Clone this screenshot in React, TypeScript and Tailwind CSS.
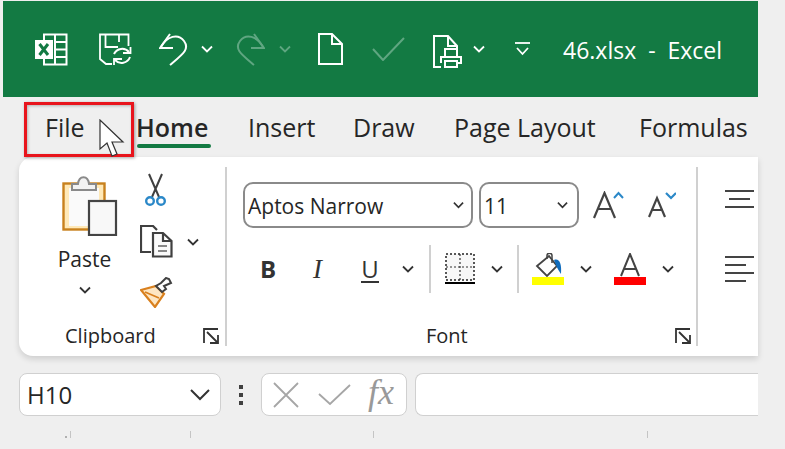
import React from "react";

const Chev = ({ c = "#fff", w = 12, className = "" }: { c?: string; w?: number; className?: string }) => (
  <svg width={w} height={8} viewBox="0 0 12 8" className={"shrink-0 " + className} fill="none">
    <path d="M1 1.5 L6 6.5 L11 1.5" stroke={c} strokeWidth="1.8" />
  </svg>
);

const ExcelIcon = () => (
  <svg width="33" height="33" viewBox="0 0 33 33" fill="none" className="shrink-0 ml-[35px]">
    <path d="M9 1.5 H31.5 V31.5 H9 Z" stroke="#fff" strokeWidth="2" />
    <path d="M20 1.5 V31.5 M20 9 H32 M20 16.5 H32 M20 24 H32" stroke="#fff" strokeWidth="2" />
    <rect x="0" y="7" width="18" height="19" fill="#fff" />
    <path d="M4.5 11 L13 22 M13 11 L4.5 22" stroke="#137a43" strokeWidth="3" />
  </svg>
);
const SaveIcon = () => (
  <svg width="33" height="33" viewBox="0 0 33 33" fill="none" className="shrink-0 ml-[31px]">
    <path d="M13 31 H7 L1 26 V1.5 H29.5 V13" stroke="#fff" strokeWidth="1.8" />
    <path d="M6.5 2 V14 H19" stroke="#fff" strokeWidth="1.8" />
    <path d="M20 2 V9 M19 14 H14" stroke="#fff" strokeWidth="1.8" />
    <path d="M15 21 A 9 9 0 0 1 30 19 M31 24 A 9 9 0 0 1 16 27" stroke="#fff" strokeWidth="2" />
    <path d="M24 20 H31.5 V14 M23 26 H15 V32" stroke="#fff" strokeWidth="1.8" />
  </svg>
);
const UndoIcon = ({ c = "#fff", flip = false, ml }: { c?: string; flip?: boolean; ml: string }) => (
  <svg width="29" height="33" viewBox="0 0 29 33" fill="none" className={"shrink-0 " + ml} style={flip ? { transform: "scaleX(-1)" } : undefined}>
    <path d="M11 1 L1 15 H14" stroke={c} strokeWidth="2" />
    <path d="M2 14 C 8 3, 19 0, 25 8 C 31 16, 24 21, 11 32" stroke={c} strokeWidth="2" />
  </svg>
);
const NewDoc = () => (
  <svg width="25" height="32" viewBox="0 0 25 32" fill="none" className="shrink-0 ml-[27px]">
    <path d="M1 1 H14 L24 11 V31 H1 Z M14 1 V11 H24" stroke="#fff" strokeWidth="2" />
  </svg>
);
const Check = () => (
  <svg width="33" height="24" viewBox="0 0 33 24" fill="none" className="shrink-0 ml-[29px]">
    <path d="M1 12 L11 23 L32 1" stroke="#5fa681" strokeWidth="2" />
  </svg>
);
const PrintIcon = () => (
  <svg width="29" height="33" viewBox="0 0 29 33" fill="none" className="shrink-0 ml-[28px] mt-[4px]">
    <path d="M8 32 H1 V1 H15 L24 11 V14 M15 1 V11 H24" stroke="#fff" strokeWidth="2" />
    <path d="M12 22 V14 H24 V22 M8 28 V22 H28 V28 H24 M12 26 H24 V32 H12 Z" stroke="#fff" strokeWidth="2" />
  </svg>
);
const Qat = () => (
  <svg width="15" height="15" viewBox="0 0 15 15" fill="none" className="shrink-0 ml-[30px]">
    <path d="M0 1 H15" stroke="#fff" strokeWidth="1.8" />
    <path d="M2 6 L7.5 12 L13 6" stroke="#fff" strokeWidth="1.8" />
  </svg>
);

const Cursor = () => (
  <svg width="26" height="40" viewBox="0 0 26 40" className="absolute left-[99px] top-[119px]">
    <path d="M1 1 V30 L8 24 L13 37 L18 35 L13 23 L24 23 Z" fill="#fff" stroke="#333" strokeWidth="1.2" />
  </svg>
);

const Launcher = ({ ml }: { ml: string }) => (
  <svg width="16" height="16" viewBox="0 0 16 16" fill="none" className={"shrink-0 " + ml}>
    <path d="M1 15 V1 H15" stroke="#333" strokeWidth="1.8" />
    <path d="M4 4 L14 14 M15 7 V15 H7" stroke="#333" strokeWidth="1.8" />
  </svg>
);

const PasteIcon = () => (
  <svg width="56" height="61" viewBox="0 0 56 61" fill="none" className="shrink-0">
    <rect x="1.5" y="8.5" width="41" height="46" fill="#ffe9b8" stroke="#c8811d" strokeWidth="2.4" />
    <rect x="7" y="13" width="30" height="38" fill="#fafafa" />
    <path d="M10 15 V9 H16 C17 0, 26 0, 27 9 H34 V15 Z" fill="#f2f2f2" stroke="#8a8a8a" strokeWidth="2" />
    <rect x="27" y="26" width="27" height="34" fill="#f8f8f8" stroke="#444" strokeWidth="2.2" />
  </svg>
);
const Scissors = () => (
  <svg width="21" height="34" viewBox="0 0 21 34" fill="none">
    <path d="M4 1 L14 24 M17 1 L7 24" stroke="#404040" strokeWidth="2" />
    <circle cx="5" cy="28" r="3.8" fill="#fff" stroke="#2b88c8" strokeWidth="2.4" />
    <circle cx="16" cy="28" r="3.8" fill="#fff" stroke="#2b88c8" strokeWidth="2.4" />
  </svg>
);
const CopyIcon = () => (
  <svg width="33" height="33" viewBox="0 0 33 33" fill="none">
    <path d="M11 27 H1 V1 H13 L17 5" stroke="#404040" strokeWidth="2.2" />
    <path d="M13 8 H23 L31.5 16 V31.5 H13 Z M23 8 V16 H31.5" fill="#fafafa" stroke="#404040" strokeWidth="2.2" />
    <path d="M18 21 H27 M18 26 H27" stroke="#888" strokeWidth="2.2" />
  </svg>
);
const Painter = () => (
  <svg width="33" height="31" viewBox="0 0 33 31" fill="none">
    <path d="M1 13 L16 9 L24 17 L15 30 Z" fill="#fde6c3" stroke="#d9801e" strokeWidth="2.2" />
    <path d="M5 15 L19 21" stroke="#d9801e" strokeWidth="1.8" />
    <path d="M16 9 L22 15 L26 12 L24 9 L31 6 L29 2 L26 1 L21 6 Z" fill="#fff" stroke="#404040" strokeWidth="2" />
  </svg>
);

const BordersIcon = () => (
  <svg width="30" height="32" viewBox="0 0 30 32" fill="none" className="shrink-0 ml-[14px]">
    <rect x="1" y="1" width="28" height="26" fill="#f7f7f7" stroke="#222" strokeWidth="1.5" strokeDasharray="2 2" />
    <path d="M15 1 V27 M1 14 H29" stroke="#333" strokeWidth="1.2" strokeDasharray="2 2" />
    <rect x="0" y="29" width="30" height="2" fill="#000" />
  </svg>
);
const FillIcon = () => (
  <svg width="32" height="32" viewBox="0 0 32 32" fill="none" className="shrink-0 ml-[13px]">
    <path d="M5 13 L17 3 L25 13 L15 23 Z" fill="#fff" stroke="#444" strokeWidth="1.8" />
    <path d="M15 6 V2.5 C15 -0.5 20 -0.5 20 2.5 V10" stroke="#444" strokeWidth="1.5" />
    <path d="M22 7 C27 5 30 10 29 21 C27 18 25 15 24 12 Z" fill="#0f6cbd" />
    <rect x="0" y="24" width="32" height="8" fill="#ffff00" />
  </svg>
);
const ColorA = () => (
  <svg width="32" height="32" viewBox="0 0 32 32" fill="none" className="shrink-0 ml-[22px]">
    <path d="M7 23 L16 1 L25 23 M10 16 H22" stroke="#444" strokeWidth="2" />
    <rect x="0" y="24" width="32" height="8" fill="#ff0000" />
  </svg>
);
const GrowA = () => (
  <svg width="31" height="28" viewBox="0 0 31 28" fill="none" className="shrink-0 ml-[14px]">
    <path d="M1 27 L11.5 2 L22 27 M5 18 H18" stroke="#444" strokeWidth="2.2" />
    <path d="M21 7 L25.5 2 L30 7" stroke="#2b88c8" strokeWidth="2" />
  </svg>
);
const ShrinkA = () => (
  <svg width="28" height="26" viewBox="0 0 28 26" fill="none" className="shrink-0 ml-[24px]">
    <path d="M1 25 L9 6 L17 25 M4 18 H14" stroke="#444" strokeWidth="2.2" />
    <path d="M18 1 L23 6 L28 1" stroke="#2b88c8" strokeWidth="2.2" />
  </svg>
);
const AlignLines = ({ rows }: { rows: number[][] }) => (
  <svg width="29" height={rows.length * 8 + 2} viewBox={`0 0 29 ${rows.length * 8 + 2}`} fill="none">
    {rows.map((r, i) => (
      <rect key={i} x={r[0]} y={i * 8 + 1} width={r[1]} height="2" fill="#444" />
    ))}
  </svg>
);

const Combo = ({ w, text, pad }: { w: string; text: string; pad: string }) => (
  <div className={"h-[46px] flex items-center justify-between rounded-[10px] border-2 border-[#8a8a8a] bg-white text-[21px] text-[#262626] " + w + " " + pad}>
    <span className="pt-[3px] leading-none">{text}</span>
    <Chev c="#333" w={11} />
  </div>
);

export default function App() {
  return (
    <div
      className="relative w-[785px] h-[449px] overflow-hidden bg-[#efefef] text-[#262626]"
      style={{ fontFamily: '"Open Sans", "Noto Sans", sans-serif' }}
    >
      <div className="ml-[3px] mt-[1px] w-[755px] h-[96px] bg-[#137a43] flex items-center text-white">
        <div className="flex items-center -ml-[3px]">
          <ExcelIcon />
          <SaveIcon />
          <UndoIcon ml="ml-[27px]" />
          <Chev w={12} className="ml-[13px]" />
          <UndoIcon c="#5fa681" flip ml="ml-[23px]" />
          <Chev c="#5fa681" w={12} className="ml-[14px]" />
          <NewDoc />
          <Check />
          <PrintIcon />
          <Chev w={12} className="ml-[11px]" />
          <Qat />
          <span className="ml-[33px] mt-[3px] text-[23px] leading-none whitespace-pre">46.xlsx  -  Excel</span>
        </div>
      </div>

      <div className="h-[60px] w-[758px] flex items-center text-[25px] leading-none whitespace-nowrap">
        <span className="ml-[45px] w-[91px] shrink-0">File</span>
        <div className="relative w-[112px] shrink-0">
          <span className="font-semibold">Home</span>
          <div className="absolute left-[1px] w-[74px] -bottom-[8px] h-[4px] rounded-full bg-[#137a43]" />
        </div>
        <span className="w-[105px] shrink-0">Insert</span>
        <span className="w-[101px] shrink-0">Draw</span>
        <span className="w-[185px] shrink-0">Page Layout</span>
        <span className="shrink-0">Formulas</span>
      </div>

      <div className="ml-[19px] w-[739px] h-[199px] bg-white rounded-l-[14px] shadow-[0_3px_6px_rgba(0,0,0,0.14)] flex text-[20px]">
        <div className="w-[208px] shrink-0 border-r-2 border-[#d0d0d0] my-[10px] flex flex-col">
          <div className="h-[160px] flex">
            <div className="ml-[43px] w-[56px] flex flex-col items-center">
              <div className="mt-[8px]"><PasteIcon /></div>
              <div className="mt-[9px] -ml-[11px] text-[21px] leading-[28px]">Paste</div>
              <Chev c="#333" w={12} className="mt-[13px] -ml-[11px]" />
            </div>
            <div className="ml-[22px] flex flex-col">
              <div className="ml-[5px] mt-[6px]"><Scissors /></div>
              <div className="mt-[18px] flex items-center">
                <CopyIcon />
                <Chev c="#333" w={12} className="ml-[14px]" />
              </div>
              <div className="mt-[19px]"><Painter /></div>
            </div>
          </div>
          <div className="flex-1 flex items-center">
            <span className="ml-[46px] text-[20px] leading-none">Clipboard</span>
            <Launcher ml="ml-[47px]" />
          </div>
        </div>

        <div className="w-[471px] shrink-0 border-r-2 border-[#d0d0d0] my-[10px] flex flex-col">
          <div className="h-[160px] pl-[16px] flex flex-col">
            <div className="mt-[15px] flex items-center">
              <Combo w="w-[230px]" text="Aptos Narrow" pad="pl-[3px] pr-[7px]" />
              <Combo w="w-[100px] ml-[6px]" text="11" pad="pl-[3px] pr-[9px]" />
              <GrowA />
              <ShrinkA />
            </div>
            <div className="mt-[17px] h-[48px] flex items-center">
              <span className="ml-[17px] w-[16px] text-[24px] leading-none font-bold text-[#333]">B</span>
              <span className="ml-[37px] w-[14px] text-[27px] leading-none italic text-[#333]" style={{ fontFamily: '"Liberation Serif", serif' }}>I</span>
              <span className="ml-[34px] w-[18px] text-[24px] leading-[25px] border-b-2 border-[#333] text-[#333] flex justify-center">U</span>
              <Chev c="#333" w={12} className="ml-[23px]" />
              <div className="ml-[15px] w-[2px] h-[48px] bg-[#d0d0d0]" />
              <BordersIcon />
              <Chev c="#333" w={12} className="ml-[16px]" />
              <div className="ml-[14px] w-[2px] h-[48px] bg-[#d0d0d0]" />
              <FillIcon />
              <Chev c="#333" w={12} className="ml-[16px]" />
              <ColorA />
              <Chev c="#333" w={12} className="ml-[16px]" />
            </div>
          </div>
          <div className="flex-1 flex items-center">
            <span className="ml-[199px] text-[20px] leading-none">Font</span>
            <Launcher ml="ml-[207px]" />
          </div>
        </div>

        <div className="ml-[27px] flex flex-col">
          <div className="mt-[32px]"><AlignLines rows={[[0, 29], [4, 21], [0, 29]]} /></div>
          <div className="mt-[40px]"><AlignLines rows={[[0, 29], [0, 21], [0, 29], [0, 21]]} /></div>
        </div>
      </div>

      <div className="mt-[17px] ml-[19px] w-[739px] h-[43px] flex items-stretch">
        <div className="w-[202px] rounded-[8px] border border-[#d0d0d0] bg-white flex items-center justify-between pl-[7px] pr-[10px] text-[24px] leading-none">
          <span>H10</span>
          <svg width="20" height="12" viewBox="0 0 20 12" fill="none"><path d="M1 1 L10 10 L19 1" stroke="#333" strokeWidth="2" /></svg>
        </div>
        <div className="w-[40px] flex flex-col items-center justify-center gap-[4px]">
          <div className="w-[4px] h-[4px] bg-[#404040]" />
          <div className="w-[4px] h-[4px] bg-[#404040]" />
          <div className="w-[4px] h-[4px] bg-[#404040]" />
        </div>
        <div className="w-[146px] rounded-[8px] border border-[#d0d0d0] bg-white flex items-center">
          <svg width="26" height="26" viewBox="0 0 26 26" fill="none" className="ml-[11px]"><path d="M1 1 L25 25 M25 1 L1 25" stroke="#a6a6a6" strokeWidth="1.8" /></svg>
          <svg width="33" height="22" viewBox="0 0 33 22" fill="none" className="ml-[19px]"><path d="M1 10 L12 20 L32 1" stroke="#a6a6a6" strokeWidth="1.8" /></svg>
          <span className="ml-[17px] text-[36px] leading-none italic text-[#999999] -mt-[5px]" style={{ fontFamily: '"Liberation Serif", serif' }}>fx</span>
        </div>
        <div className="ml-[8px] flex-1 rounded-l-[8px] border border-r-0 border-[#d0d0d0] bg-white" />
      </div>

      <div className="mt-[14px] h-[8px] flex items-end">
        <div className="ml-[65px] w-[2px] h-[2px] bg-[#b0b0b0]" />
        <div className="ml-[3px] w-px h-[7px] bg-[#c4c4c4]" />
        <div className="ml-[119px] w-px h-[7px] bg-[#c4c4c4]" />
        <div className="ml-[182px] w-px h-[7px] bg-[#c4c4c4]" />
        <div className="ml-[273px] w-px h-[7px] bg-[#c4c4c4]" />
      </div>

      <div className="absolute left-[24px] top-[102px] w-[110px] h-[55px] border-[3px] border-[#e8141c] shadow-[1px_1px_3px_rgba(0,0,0,0.35),inset_1px_1px_3px_rgba(0,0,0,0.25)]" />
      <Cursor />
    </div>
  );
}
